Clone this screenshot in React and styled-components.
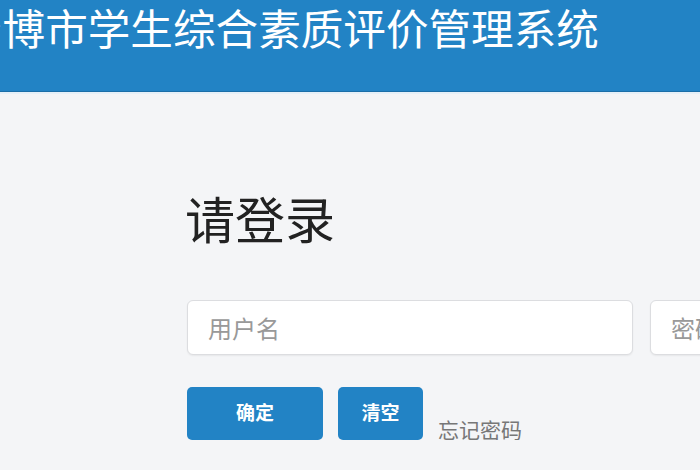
import React from 'react';
import styled, { createGlobalStyle } from 'styled-components';

const GlobalStyle = createGlobalStyle`
  html, body {
    margin: 0;
    padding: 0;
    overflow: hidden;
    background: #f4f5f7;
    font-family: "Noto Sans CJK SC", "Noto Sans", sans-serif;
  }
`;

const Header = styled.header`
  height: 91px;
  background: #2283c5;
  border-bottom: 1px solid #1a6ea8;
  box-shadow: 0 2px 0 #e6f0f8;
  overflow: hidden;
`;

const SiteTitle = styled.h1`
  margin: 0 0 0 -40px;
  font-size: 42.6px;
  font-weight: 400;
  line-height: 54px;
  color: #fff;
  white-space: nowrap;
`;

const Main = styled.main`
  padding: 95px 0 0 185px;
`;

const Heading = styled.h2`
  margin: 0 0 53px;
  font-size: 50px;
  font-weight: 400;
  line-height: 60px;
  color: #222;
`;

const Fields = styled.div`
  display: flex;
  gap: 17px;
  padding-left: 2px;
  width: 1000px;
`;

const Field = styled.input`
  box-sizing: border-box;
  width: 446px;
  height: 55px;
  padding: 0 20px;
  border: 1px solid #dcdde0;
  border-radius: 6px;
  background: #fff;
  box-shadow: 0 1px 2px rgba(0, 0, 0, 0.06);
  font-family: inherit;
  font-size: 24px;
  color: #333;
  outline: none;

  &::placeholder {
    color: #999;
  }
`;

const Actions = styled.div`
  display: flex;
  align-items: flex-end;
  gap: 15px;
  margin-top: 32px;
  padding-left: 2px;
`;

const Button = styled.button`
  width: ${(p) => p.$w}px;
  height: 53px;
  border: 0;
  border-radius: 5px;
  background: #2283c5;
  color: #fff;
  font-family: inherit;
  font-size: 19px;
  font-weight: 700;
  cursor: pointer;
  padding: 0 0 4px;
`;

const Forgot = styled.a`
  margin-bottom: -3px;
  font-size: 21px;
  line-height: 28px;
  color: #777;
  text-decoration: none;
  cursor: pointer;
`;

export default function App() {
  return (
    <>
      <GlobalStyle />
      <Header>
        <SiteTitle>淄博市学生综合素质评价管理系统</SiteTitle>
      </Header>
      <Main>
        <Heading>请登录</Heading>
        <Fields>
          <Field placeholder="用户名" />
          <Field type="password" placeholder="密码" />
        </Fields>
        <Actions>
          <Button $w={136}>确定</Button>
          <Button $w={85}>清空</Button>
          <Forgot>忘记密码</Forgot>
        </Actions>
      </Main>
    </>
  );
}
